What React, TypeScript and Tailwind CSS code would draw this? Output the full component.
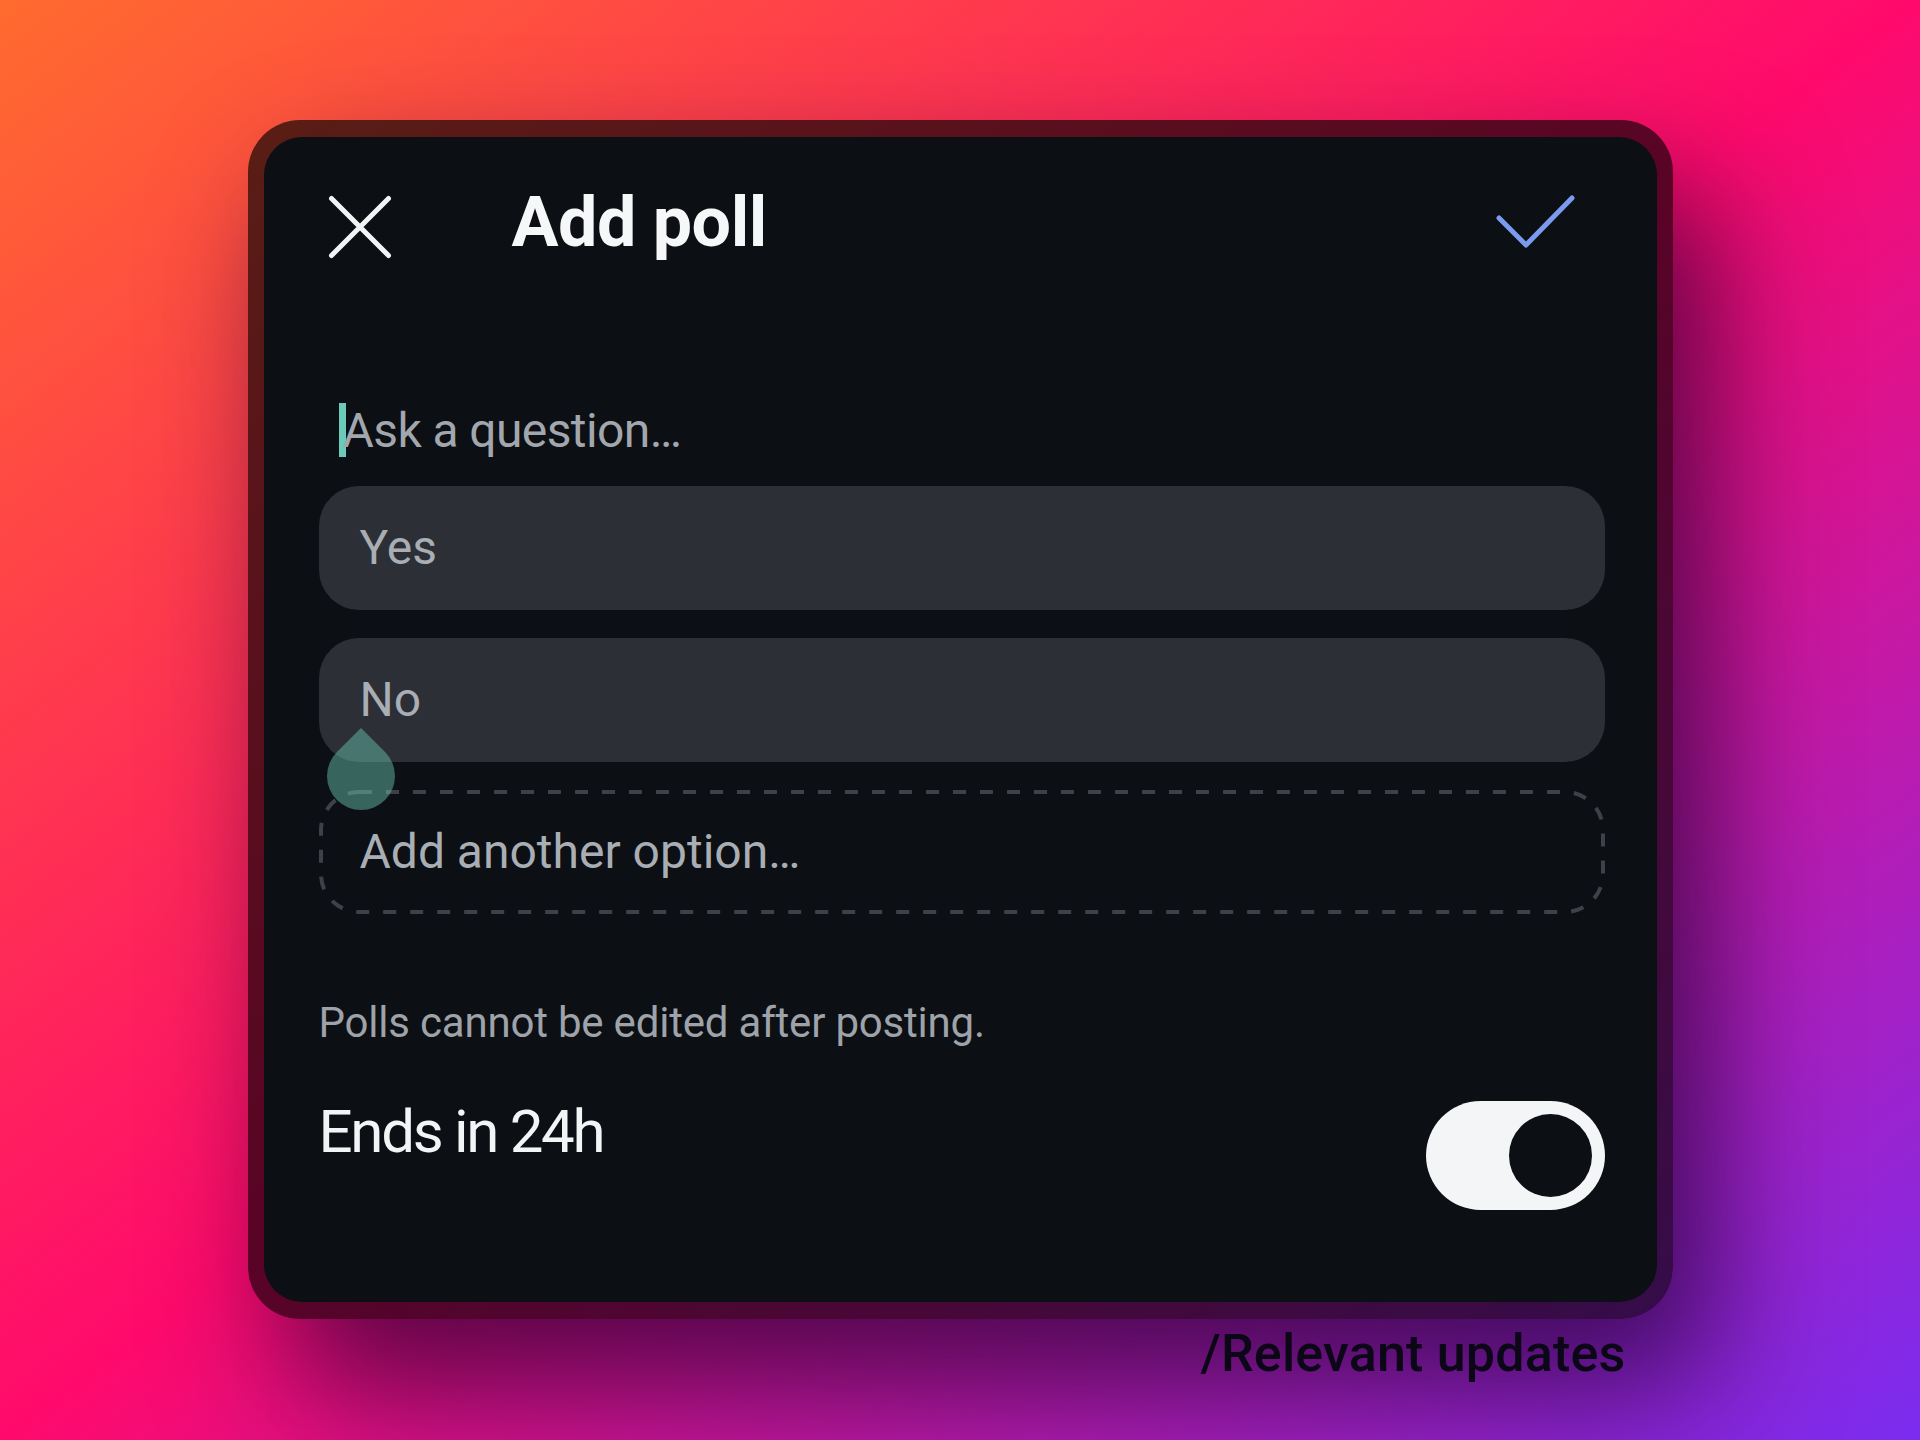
const fieldText = "text-[48px] leading-none text-[#a9adb4]";

function CloseIcon() {
  return (
    <svg width="70" height="70" viewBox="0 0 70 70" fill="none" className="mt-[6px] shrink-0">
      <path d="M6.5 6.5L63.5 63.5M63.5 6.5L6.5 63.5" stroke="#f2f3f5" strokeWidth="5" strokeLinecap="round" />
    </svg>
  );
}

function CheckIcon() {
  return (
    <svg width="82" height="56" viewBox="0 0 82 56" fill="none" className="mt-[8px] shrink-0">
      <path d="M4 24L31 51L77 4" stroke="#7b9bef" strokeWidth="5" strokeLinecap="round" strokeLinejoin="round" />
    </svg>
  );
}

function OptionField({ label, children }: { label: string; children?: React.ReactNode }) {
  return (
    <div className="relative h-[124px] rounded-[40px] bg-[#2c2f36] flex items-center pl-[41px]">
      <span className={fieldText}>{label}</span>
      {children}
    </div>
  );
}

// dashed outline drawn as svg so the dash length matches
function DashedOutline() {
  return (
    <svg className="absolute inset-0 pointer-events-none" width="1286" height="124" viewBox="0 0 1286 124" fill="none">
      <rect x="2" y="2" width="1282" height="120" rx="38" stroke="#3e4148" strokeWidth="4" strokeDasharray="13 14" />
    </svg>
  );
}

export default function App() {
  return (
    <div className="min-h-[1440px] w-full flex flex-col items-center pt-[120px] bg-[linear-gradient(to_bottom_right,#ff6b2e,#ff0a6c_50%,#7a2cf0)] font-['Roboto','Liberation_Sans',sans-serif]">
      <div className="w-[1425px] rounded-[52px] bg-black/65 pt-[17px] pb-[17px] px-[16px] shadow-[40px_70px_130px_rgba(25,0,45,0.7)]">
        <div className="rounded-[38px] bg-[#0c0f13] pt-[49px] pb-[92px] flex flex-col">
          {/* header */}
          <div className="flex items-start justify-between h-[80px] pl-[61px] pr-[80px]">
            <div className="flex items-start">
              <CloseIcon />
              <h1 className="ml-[117px] mt-[1px] text-[70px] leading-none font-bold tracking-[-0.5px] text-[#f6f7f8]">
                Add poll
              </h1>
            </div>
            <CheckIcon />
          </div>

          <div className="pl-[55px] pr-[52px] flex flex-col">
            {/* question */}
            <div className="mt-[137px] flex items-start pl-[20px] h-[54px]">
              <span className="w-[7px] h-[54px] bg-[#6ccbb8] shrink-0" />
              <span className="-ml-[3px] mt-[4px] text-[48px] leading-none tracking-[-0.6px] text-[#a2a6ad]">
                Ask a question…
              </span>
            </div>

            {/* options */}
            <div className="mt-[29px] flex flex-col gap-[28px]">
              <OptionField label="Yes" />
              <OptionField label="No">
                <span className="absolute left-[8px] top-[104px] z-10 w-[68px] h-[68px] rotate-45 rounded-full rounded-tl-none bg-[#6ccbb8]/45" />
              </OptionField>
              <div className="relative h-[124px] flex items-center pl-[41px]">
                <DashedOutline />
                <span className={fieldText}>Add another option…</span>
              </div>
            </div>

            <p className="mt-[88px] text-[42px] leading-none tracking-[-0.2px] text-[#9ea2a9]">
              Polls cannot be edited after posting.
            </p>

            <div className="mt-[57px] flex items-start justify-between">
              <span className="mt-[1px] text-[60px] leading-none tracking-[-2.3px] text-[#f3f4f6]">Ends in 24h</span>
              <div className="w-[179px] h-[109px] rounded-full bg-[#f4f5f6] flex items-center justify-end pr-[13px]">
                <span className="w-[83px] h-[83px] rounded-full bg-[#0c0f13]" />
              </div>
            </div>
          </div>
        </div>
      </div>

      <div className="w-[1425px] mt-[9px] pr-[47px] text-right text-[52px] leading-none font-medium tracking-[0.2px] text-[#0b0716]">
        /Relevant updates
      </div>
    </div>
  );
}
